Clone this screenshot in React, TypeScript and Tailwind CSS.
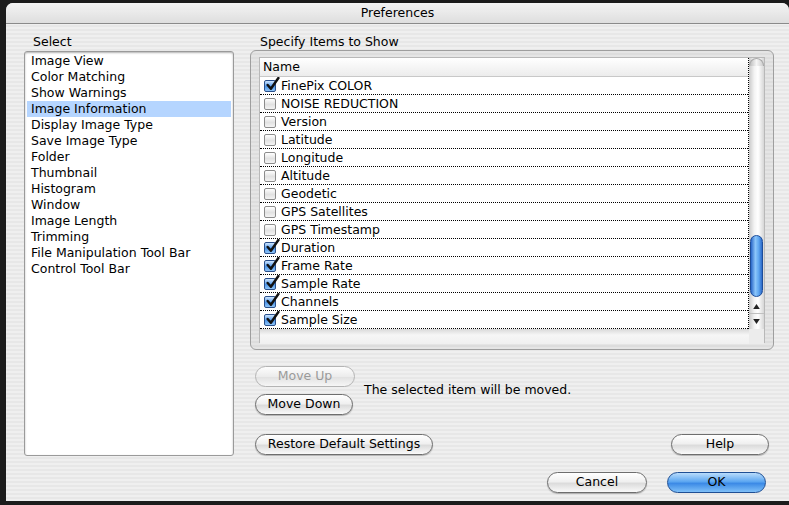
import React from "react";

const selectItems = [
  "Image View",
  "Color Matching",
  "Show Warnings",
  "Image Information",
  "Display Image Type",
  "Save Image Type",
  "Folder",
  "Thumbnail",
  "Histogram",
  "Window",
  "Image Length",
  "Trimming",
  "File Manipulation Tool Bar",
  "Control Tool Bar",
];

const rows: { name: string; on: boolean }[] = [
  { name: "FinePix COLOR", on: true },
  { name: "NOISE REDUCTION", on: false },
  { name: "Version", on: false },
  { name: "Latitude", on: false },
  { name: "Longitude", on: false },
  { name: "Altitude", on: false },
  { name: "Geodetic", on: false },
  { name: "GPS Satellites", on: false },
  { name: "GPS Timestamp", on: false },
  { name: "Duration", on: true },
  { name: "Frame Rate", on: true },
  { name: "Sample Rate", on: true },
  { name: "Channels", on: true },
  { name: "Sample Size", on: true },
];

const CheckBox = ({ on }: { on: boolean }) =>
  on ? (
    <span className="relative flex h-[12px] w-[12px] shrink-0 rounded-[2px] border border-[#2a4f8a] bg-[linear-gradient(180deg,#cfe6ff,#4f97ea_55%,#8ec4f7)]">
      <svg
        viewBox="0 0 14 14"
        className="absolute left-[0px] top-[-4px] h-[15px] w-[15px]"
      >
        <path
          d="M2.5 7.5 L5.5 11 L12.5 1"
          fill="none"
          stroke="#111"
          strokeWidth="2.3"
          strokeLinecap="round"
          strokeLinejoin="round"
        />
      </svg>
    </span>
  ) : (
    <span className="flex h-[12px] w-[12px] shrink-0 rounded-[2px] border border-[#8c8c8c] bg-[linear-gradient(180deg,#ffffff,#e2e2e2_55%,#f4f4f4)]" />
  );

const AquaButton = ({
  label,
  width,
  disabled,
  primary,
}: {
  label: string;
  width: string;
  disabled?: boolean;
  primary?: boolean;
}) => (
  <div
    className={`flex h-[21px] items-center justify-center rounded-full border text-[12.5px] ${width} ${
      primary
        ? "border-[#1f4f94] bg-[linear-gradient(180deg,#b9dcfb,#5da7f1_45%,#3c8ae6_55%,#7fc0f8)] text-black"
        : disabled
        ? "border-[#b4b4b4] bg-[linear-gradient(180deg,#fdfdfd,#ececec_50%,#e2e2e2_55%,#f6f6f6)] text-[#9a9a9a]"
        : "border-[#6e6e6e] bg-[linear-gradient(180deg,#ffffff,#f0f0f0_45%,#dcdcdc_55%,#fafafa)] text-black shadow-[0_1px_1px_rgba(0,0,0,0.25)]"
    }`}
  >
    {label}
  </div>
);

export default function App() {
  return (
    <div className="h-[505px] w-[789px] overflow-hidden bg-[#1c1c1c] pl-[6px] pt-[3px] font-['DejaVu_Sans',sans-serif] text-black">
      <div className="flex h-[498px] w-[783px] flex-col overflow-hidden rounded-t-[7px] bg-[repeating-linear-gradient(180deg,#efefef_0px,#efefef_2px,#e7e7e7_2px,#e7e7e7_4px)]">
        {/* title bar */}
        <div className="flex h-[21px] shrink-0 items-center justify-center border-b border-[#8a8a8a] bg-[linear-gradient(180deg,#f4f4f4,#dedede)] text-[12.5px]">
          Preferences
        </div>

        <div className="flex pl-[18px] pr-[15px] pt-[10px]">
          {/* left column */}
          <div className="flex w-[210px] flex-col">
            <div className="h-[17px] pl-[9px] text-[12.5px] leading-[16px]">Select</div>
            <div className="h-[405px] rounded-[3px] border border-[#9a9a9a] bg-white pt-[1px] shadow-[inset_0_1px_2px_rgba(0,0,0,0.3)]">
              {selectItems.map((s, i) => (
                <div
                  key={s}
                  className={`mx-[2px] h-[16px] pl-[4px] text-[12.5px] leading-[16px] ${
                    i === 3 ? "bg-[#b5d5ff]" : ""
                  }`}
                >
                  {s}
                </div>
              ))}
            </div>
          </div>

          {/* right column */}
          <div className="ml-[16px] flex w-[524px] flex-col">
            <div className="h-[16px] pl-[10px] text-[12.5px] leading-[16px]">
              Specify Items to Show
            </div>
            <div className="h-[300px] rounded-[6px] border border-[#9e9e9e] bg-black/[0.04] px-[8px] py-[6px]">
              <div className="flex h-[286px] flex-col border border-[#b8b8b8] bg-white">
                <div className="flex flex-1">
                  <div className="flex flex-1 flex-col border-r border-dotted border-black">
                    <div className="h-[19px] border-b border-[#c8c8c8] bg-[linear-gradient(180deg,#ffffff,#ececec)] pl-[3px] text-[12.5px] leading-[18px]">
                      Name
                    </div>
                    {rows.map((r) => (
                      <div
                        key={r.name}
                        className="flex h-[18px] items-center gap-[5px] border-b border-dotted border-black pl-[4px] text-[12.5px]"
                      >
                        <CheckBox on={r.on} />
                        <span className="leading-[17px]">{r.name}</span>
                      </div>
                    ))}
                  </div>
                  {/* vertical scrollbar */}
                  <div className="flex w-[15px] flex-col bg-[linear-gradient(90deg,#c9c9c9,#f3f3f3_35%,#ffffff_60%,#d6d6d6)]">
                    <div className="h-[8px] rounded-t-full border-x border-t border-[#a8a8a8] bg-[linear-gradient(90deg,#bdbdbd,#f5f5f5_50%,#cfcfcf)]" />
                    <div className="flex-1" />
                    <div className="mx-[1px] mb-[2px] h-[62px] rounded-full border border-[#1d4d9a] bg-[linear-gradient(90deg,#2a67c8,#8cc6fa_40%,#5ea6f0_70%,#2c69c9)]" />
                    <div className="flex h-[15px] items-center justify-center border-b border-[#c0c0c0]">
                      <svg viewBox="0 0 8 6" className="h-[5px] w-[7px]">
                        <path d="M4 0 L8 6 L0 6 Z" fill="#222" />
                      </svg>
                    </div>
                    <div className="flex h-[15px] items-center justify-center">
                      <svg viewBox="0 0 8 6" className="h-[5px] w-[7px]">
                        <path d="M0 0 L8 0 L4 6 Z" fill="#222" />
                      </svg>
                    </div>
                  </div>
                </div>
                <div className="flex h-[15px] shrink-0">
                  <div className="flex-1 bg-[linear-gradient(180deg,#d8d8d8,#f6f6f6_40%,#f0f0f0)]" />
                  <div className="w-[15px] bg-[#ececec]" />
                </div>
              </div>
            </div>

            <div className="mt-[16px] flex items-center pl-[5px]">
              <div className="flex flex-col gap-[7px]">
                <AquaButton label="Move Up" width="w-[100px]" disabled />
                <AquaButton label="Move Down" width="w-[98px]" />
              </div>
              <div className="ml-[9px] text-[12.5px]">The selected item will be moved.</div>
            </div>

            <div className="mt-[19px] flex items-center justify-between pl-[5px] pr-[5px]">
              <AquaButton label="Restore Default Settings" width="w-[178px]" />
              <AquaButton label="Help" width="w-[98px]" />
            </div>
          </div>
        </div>

        <div className="mt-[16px] flex justify-end gap-[20px] pr-[23px]">
          <AquaButton label="Cancel" width="w-[100px]" />
          <AquaButton label="OK" width="w-[99px]" primary />
        </div>
      </div>
    </div>
  );
}
